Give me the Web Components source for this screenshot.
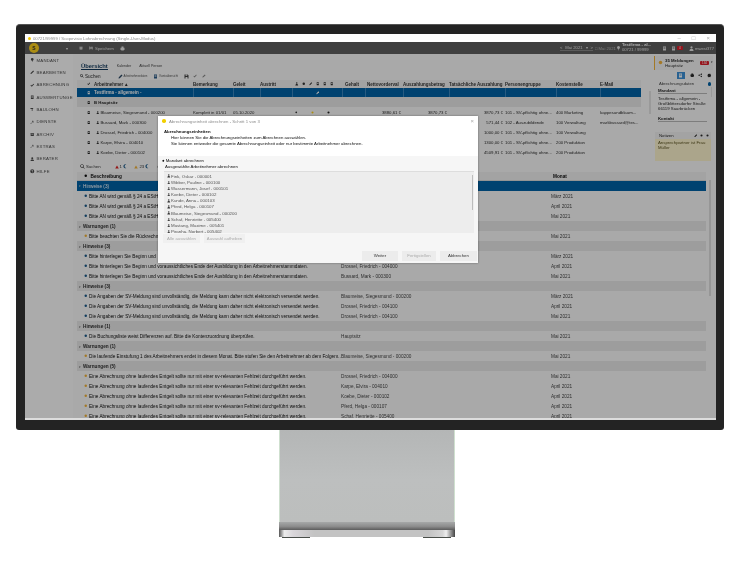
<!DOCTYPE html>
<html lang="de">
<head>
<meta charset="utf-8">
<title>Lohnabrechnung</title>
<style>
  html, body { margin: 0; background: #fff; height: 100%; overflow: hidden; }
  body { font-family: "Liberation Sans", Arial, sans-serif; }
  #page { display: flex; flex-direction: column; padding: 24px 0 0 16px; }
</style>
</head>
<body>
<div id="page">
  <device-monitor>
    <window-titlebar></window-titlebar>
    <app-shell>
      <app-toolbar slot="top"></app-toolbar>
      <side-nav slot="nav"></side-nav>
      <employee-table slot="table"></employee-table>
      <info-panel slot="panel"></info-panel>
      <message-list slot="messages"></message-list>
      <wizard-dialog slot="dialog"></wizard-dialog>
    </app-shell>
  </device-monitor>
  <device-stand></device-stand>
</div>

<script>
/**
 * Small inline icons, all on a 10x10 box.
 */
const ICONS = {
    person: '<circle cx="5" cy="2.8" r="2.2"/><path d="M1 10c0-3 1.6-4.4 4-4.4S9 7 9 10z"/>',
    pencil: '<path d="M1 9l.6-2.6L7 1l2 2-5.4 5.4z"/>',
    check: '<path d="M1 5.5l1.4-1.4L4 5.7 7.8 1.5 9.2 3 4 8.6z"/>',
    doc: '<path d="M2 1h6v8H2zM3 3v1h4V3zM3 5v1h4V5z" fill-rule="evenodd"/>',
    pin: '<path d="M5 0a3 3 0 013 3c0 1.6-1.4 2.5-2.4 3.4L5 10l-.6-3.6C3.400 5.500 2 4.600 2 3a3 3 0 013-3z"/>',
    box: '<path d="M1 2h8v2H1zM1.500 4.500h7V9h-7zM3 5.500v1h4v-1z" fill-rule="evenodd"/>',
    wrench: '<path d="M9 2.500A3 3 0 015 5L2 9 1 8l4-3.200A3 3 0 017.500 1L6 2.500 7.500 4z"/>',
    hammer: '<path d="M1 2h6v2.500H5.500V9H4V4.500H1z"/>',
    help: '<path d="M5 .5a4.500 4.500 0 100 9 4.500 4.500 0 000-9zM4.300 7h1.400v1.200H4.300zM3 3.800C3 2.600 4 2 5 2s2 .6 2 1.700c0 1.300-1.300 1.400-1.300 2.600H4.400c0-1.800 1.300-1.800 1.300-2.600 0-.4-.3-.6-.7-.6s-.7.3-.7.7z" fill-rule="evenodd"/>',
    search: '<path d="M4 .5a3.500 3.500 0 012.800 5.600L9.500 8.800 8.800 9.500 6.100 6.800A3.500 3.500 0 114 .5zm0 1.200a2.300 2.300 0 100 4.600 2.300 2.300 0 000-4.600z" fill-rule="evenodd"/>',
    save: '<path d="M1 1h6.500L9 2.500V9H1zM3 1.500v2h3.500v-2zM3 6v3h4V6z" fill-rule="evenodd"/>',
    printer: '<path d="M3 1h4v2.500h2V8H7.500v1h-5V8H1V3.500h2z"/>',
    share: '<path d="M7.500 1a1.500 1.500 0 11-1.200 2.400L3.900 4.600a1.500 1.500 0 010 .8l2.400 1.200a1.500 1.500 0 11-.4.8L3.400 6.200a1.500 1.500 0 110-2.400l2.500-1.200A1.500 1.500 0 017.500 1z"/>',
    gear: '<path d="M5 1l1 1 1.500-.3.400 1.400L9 4.500 8.500 6l.5 1.200-1.300.8L7 9.200 5 8.800l-2 .4-.7-1.200L1 7.200 1.500 6 1 4.500 2.100 3.100l.4-1.400L4 2z"/>',
    flag: '<path d="M5 1l4.500 8h-9z"/>',
    moon: '<path d="M7.500 1a4 4 0 000 8A4.500 4.500 0 117.500 1z"/>',
    dot: '<circle cx="5" cy="5" r="3.500"/>',
};

const icon = (name, size, color) =>
    `<svg viewBox="0 0 10 10" width="${size}" height="${size}" fill="${color || 'currentColor'}" style="flex:none;display:block">${ICONS[name]}</svg>`;

/** Bezel of the display; the screen content goes in the slot. */
class DeviceMonitor extends HTMLElement {
    constructor() {
        super();
        this.attachShadow({ mode: 'open' });
        this.shadowRoot.innerHTML = `
            <style>
                :host {
                    display: flex;
                    flex-direction: column;
                    width: 708px;
                    height: 406px;
                    box-sizing: border-box;
                    padding: 9px 8px 10px 9px;
                    background: #232323;
                    border-top: 1px solid #555;
                    border-radius: 4px 4px 3px 3px;
                }
                .screen {
                    display: flex;
                    flex-direction: column;
                    flex: 1;
                    min-height: 0;
                    overflow: hidden;
                    border-bottom: 2px solid #dcdcdc;
                    filter: blur(0.38px);
                }
            </style>
            <div class="screen"><slot></slot></div>
        `;
    }
}
customElements.define('device-monitor', DeviceMonitor);

/** Aluminium stand below the display. */
class DeviceStand extends HTMLElement {
    constructor() {
        super();
        this.attachShadow({ mode: 'open' });
        this.shadowRoot.innerHTML = `
            <style>
                :host {
                    display: flex;
                    flex-direction: column;
                    width: 176px;
                    margin-left: 263px;
                }
                .neck {
                    height: 92px;
                    background: linear-gradient(180deg, #b4b6b6 0%, #bdbfbf 55%, #bcbebd 100%);
                    border-left: 1px solid #cfe0cf;
                    border-right: 1px solid #cfe0cf;
                }
                .bend {
                    height: 8px;
                    background: linear-gradient(180deg, #a6a8a8 0%, #8d8d8d 55%, #5c5c5c 100%);
                }
                .base {
                    height: 7px;
                    background: linear-gradient(90deg, #555 0, #ececec 3%, #d9d6da 8%, #c3c3c3 20%, #c3c3c3 85%, #d6d6d6 93%, #eee 95%, #444 100%);
                }
                .feet {
                    display: flex;
                    justify-content: space-between;
                    padding: 0 4px 0 3px;
                }
                .feet i {
                    width: 28px;
                    height: 1px;
                    background: #4a4f4a;
                }
            </style>
            <div class="neck"></div>
            <div class="bend"></div>
            <div class="base"></div>
            <div class="feet"><i></i><i></i></div>
        `;
    }
}
customElements.define('device-stand', DeviceStand);

/** White OS window title bar. */
class WindowTitlebar extends HTMLElement {
    constructor() {
        super();
        this.attachShadow({ mode: 'open' });
        this.shadowRoot.innerHTML = `
            <style>
                :host {
                    display: flex;
                    align-items: center;
                    flex: none;
                    height: 8px;
                    padding: 0 6px 0 3px;
                    background: #fff;
                    color: #8a8a8a;
                    font: 4.25px "Liberation Sans", sans-serif;
                }
                .logo { width: 3px; height: 3px; border-radius: 50%; background: #f2c500; margin-right: 2px; }
                .title { flex: 1; white-space: nowrap; }
                .controls { display: flex; gap: 11px; color: #aaa; font-size: 6px; }
            </style>
            <span class="logo"></span>
            <span class="title">00721/99999 / Scopevisio Lohnabrechnung (Single-User-Modus)</span>
            <span class="controls"><span>–</span><span>□</span><span>×</span></span>
        `;
    }
}
customElements.define('window-titlebar', WindowTitlebar);

/** Frame of the application: bar, nav, table, panel, messages, and the modal over them. */
class AppShell extends HTMLElement {
    constructor() {
        super();
        this.attachShadow({ mode: 'open' });
        this.shadowRoot.innerHTML = `
            <style>
                :host {
                    display: flex;
                    flex-direction: column;
                    flex: 1;
                    min-height: 0;
                    position: relative;
                    background: #fff;
                    overflow: hidden;
                }
                .body { display: flex; flex: 1; min-height: 0; }
                .main { display: flex; flex-direction: column; flex: 1; min-width: 0; }
                .upper { display: flex; flex: none; height: 107px; }
                .backdrop { position: absolute; inset: 0; background: rgba(0, 0, 0, 0.33); }
                ::slotted([slot="dialog"]) { position: absolute; left: 133px; top: 74px; }
            </style>
            <slot name="top"></slot>
            <div class="body">
                <slot name="nav"></slot>
                <div class="main">
                    <div class="upper">
                        <slot name="table"></slot>
                        <slot name="panel"></slot>
                    </div>
                    <slot name="messages"></slot>
                </div>
            </div>
            <div class="backdrop"></div>
            <slot name="dialog"></slot>
        `;
    }
}
customElements.define('app-shell', AppShell);

/** Dark application bar. */
class AppToolbar extends HTMLElement {
    constructor() {
        super();
        this.attachShadow({ mode: 'open' });
        this.shadowRoot.innerHTML = `
            <style>
                :host {
                    display: flex;
                    align-items: center;
                    flex: none;
                    height: 12px;
                    padding: 0 2px 0 4px;
                    background: #606060;
                    color: #e6e6e6;
                    font: 4.2px "Liberation Sans", sans-serif;
                    white-space: nowrap;
                }
                .logo {
                    width: 10px; height: 10px; border-radius: 50%;
                    background: #ffd21e;
                    margin-right: 27px;
                    display: grid; place-items: center;
                    color: #333; font: bold 5px "Liberation Sans", sans-serif;
                }
                .left { display: flex; align-items: center; gap: 2px; flex: 1; }
                .chev { margin-right: 9px; font-size: 4px; }
                .right { display: flex; align-items: center; }
                .period { display: flex; gap: 3px; border-bottom: 1px solid #8a8a8a; margin-right: 2px; width: 33px; justify-content: space-between; }
                .to { width: 21px; color: #b8b8b8; }
                .firm { line-height: 4.800px; margin: 0 7px 0 1px; width: 33px; }
                .firm b { color: #fff; }
                .badge { background: #e0202c; color: #fff; font-size: 3px; width: 6px; height: 4px; border-radius: 1px; display: grid; place-items: center; margin: 0 4px 0 0; }
            </style>
            <span class="logo">S</span>
            <div class="left">
                <span class="chev">▾</span>
                ${icon('box', 4)}
                <span style="width:2px"></span>
                ${icon('save', 4)}
                <span>Speichern</span>
                <span style="width:2px"></span>
                ${icon('printer', 5)}
            </div>
            <div class="right">
                <div class="period"><span>&lt;</span><span>Mai 2021</span><span>▾</span><span>&gt;</span></div>
                <div class="to">□ Mai 2021</div>
                ${icon('pin', 5)}
                <div class="firm"><b>Testfirma - al...</b><br>00721 / 99999</div>
                ${icon('doc', 5)}
                <span style="width:4px"></span>
                ${icon('doc', 5)}
                <span style="width:1px"></span>
                <span class="badge">4</span>
                <span style="width:2px"></span>
                ${icon('person', 5)}
                <span style="margin-left:1px">mwest377</span>
            </div>
        `;
    }
}
customElements.define('app-toolbar', AppToolbar);

const NAV_ITEMS = [
    ['pin', 'Mandant'], ['pencil', 'Bearbeiten'], ['check', 'Abrechnung'], ['doc', 'Auswertungen'],
    ['hammer', 'Baulohn'], ['wrench', 'Dienste'], ['box', 'Archiv'], ['wrench', 'Extras'],
    ['person', 'Berater'], ['help', 'Hilfe'],
];

/** Left navigation. */
class SideNav extends HTMLElement {
    constructor() {
        super();
        this.attachShadow({ mode: 'open' });
        const items = NAV_ITEMS.map(([i, label]) =>
            `<div class="item">${icon(i, 4.5)}<span>${label}</span></div>`).join('');
        this.shadowRoot.innerHTML = `
            <style>
                :host {
                    display: flex;
                    flex-direction: column;
                    flex: none;
                    width: 48px;
                    box-sizing: border-box;
                    padding: 0 0 0 5px;
                    background: #fff;
                    color: #4c4c4c;
                    font: 4.3px "Liberation Sans", sans-serif;
                    text-transform: uppercase;
                    letter-spacing: 0.22px;
                }
                .item { display: flex; align-items: center; gap: 2px; height: 12.35px; white-space: nowrap; }
            </style>
            ${items}
        `;
    }
}
customElements.define('side-nav', SideNav);

const EMP_COLS = '17px 99px 40px 27px 32px 50px 23px 38px 46px 56px 51px 44px 41px';
const EMPLOYEES = [
    ['Blaumeise, Siegesmund - 000200', '3870,73 €', '101 - SV-pflichtig ohne...', '400 Marketing', 'kappesundblaum...'],
    ['Bussard, Mark - 000300', '571,44 €', '102 - Auszubildende', '100 Verwaltung', 'markbussard@tes...'],
    ['Drossel, Friedrich - 004000', '1000,00 €', '101 - SV-pflichtig ohne...', '100 Verwaltung', ''],
    ['Karpe, Elvira - 004010', '1300,00 €', '101 - SV-pflichtig ohne...', '200 Produktion', ''],
    ['Koebe, Dieter - 000102', '4509,91 €', '101 - SV-pflichtig ohne...', '200 Produktion', ''],
];

/** Employee grid with its tabs and toolbar. */
class EmployeeTable extends HTMLElement {
    constructor() {
        super();
        this.attachShadow({ mode: 'open' });
        const rows = EMPLOYEES.map((e, i) => `
            <div class="row">
                <span class="c">${icon('doc', 3.5)}</span>
                <span class="who">${icon('person', 3.5)}<span>${e[0]}</span></span>
                <span>${i === 0 ? 'Komplett in 01/01' : ''}</span><span>${i === 0 ? '05.10.2020' : ''}</span><span></span>
                <span class="icons">${i === 0 ? icon('dot', 2.5, '#333') + '<i></i>' + icon('dot', 3, '#ffd21e') + '<i></i>' + icon('dot', 3, '#222') : ''}</span>
                <span></span>
                <span class="n">${i === 0 ? '3880,61 €' : ''}</span><span class="n">${i === 0 ? '3870,73 €' : ''}</span><span class="n">${e[1]}</span>
                <span>${e[2]}</span><span>${e[3]}</span><span>${e[4]}</span>
            </div>`).join('');
        this.shadowRoot.innerHTML = `
            <style>
                :host {
                    display: flex;
                    flex-direction: column;
                    flex: none;
                    width: 568px;
                    box-sizing: border-box;
                    padding: 7px 0 0 4px;
                    background: #fdfdfd;
                    color: #2a2a2a;
                    font: 4.5px "Liberation Sans", sans-serif;
                    white-space: nowrap;
                }
                .tabs { display: flex; align-items: center; gap: 8px; height: 12px; padding-left: 4px; color: #444; font-size: 3.6px; }
                .tabs b { font-size: 5.800px; color: #123a5c; border-bottom: 1px solid #123a5c; padding-bottom: .5px; margin-right: 1px; }
                .tools { display: flex; align-items: center; height: 9px; padding-left: 3px; font-size: 4.6px; }
                .tools .btn { display: flex; align-items: center; gap: 1px; font-size: 2.800px; color: #555; }
                .row, .head { display: grid; grid-template-columns: ${EMP_COLS}; align-items: center; width: 564px; }
                .row > span, .head > span { overflow: hidden; }
                .head { height: 9px; font-weight: bold; color: #333; background: #f4f4f4; }
                .row { height: 10px; }
                .list .row { font-size: 4.3px; }
                .c { display: flex; justify-content: flex-end; padding-right: 4px; color: #222; }
                .n { text-align: right; padding-right: 2px; }
                .who { display: flex; align-items: center; gap: 1px; padding-left: 2px; }
                .icons { display: flex; gap: 3.5px; padding-left: 3px; align-items: center; }
                .icons i { width: 6px; }
                .firm { background: #0063a8; color: #fff; font-weight: bold; }
                .firm .c { color: #fff; }
                .firm > span:nth-child(n+3) { border-left: .5px solid #3d88c0; height: 100%; }
                .group { background: #ebebeb; font-weight: bold; }
                .list { overflow: hidden; height: 70px; }
            </style>
            <div class="tabs"><b>Übersicht</b><span>Kalender</span><span>Aktuell Person</span></div>
            <div class="tools">
                ${icon('search', 4)}<span style="margin:0 17px 0 1px">Suchen</span>
                <span class="btn">${icon('pencil', 5, '#2c4a66')}Arbeitnehmerdaten</span>
                <span style="width:6px"></span>
                <span class="btn">${icon('doc', 5, '#2c5c88')}Kontoübersicht</span>
                <span style="width:6px"></span>
                ${icon('save', 5, '#444')}<span style="width:4px"></span>${icon('check', 4, '#888')}<span style="width:5px"></span>${icon('pencil', 4, '#888')}
            </div>
            <div class="head">
                <span class="c">${icon('check', 3.5)}</span>
                <span>Arbeitnehmer ▴</span><span>Bemerkung</span><span>Geleit</span><span>Austritt</span>
                <span class="icons">${icon('person', 3.5)}${icon('dot', 3.5)}${icon('pencil', 3.5)}${icon('doc', 3.5)}${icon('doc', 3.5)}${icon('doc', 3.5)}</span>
                <span style="padding-left:3px">Gehalt</span><span style="padding-left:2px">Nettovorderval</span><span>Auszahlungsbetrag</span>
                <span>Tatsächliche Auszahlung</span><span>Personengruppe</span><span>Kostenstelle</span><span>E-Mail</span>
            </div>
            <div class="row firm">
                <span class="c">${icon('doc', 3.5)}</span><span>Testfirma - allgemein -</span>
                <span></span><span></span><span></span>
                <span style="display:flex;justify-content:center;align-items:center">${icon('pencil', 3.5)}</span>
                <span></span><span></span><span></span><span></span><span></span><span></span><span></span>
            </div>
            <div class="list">
                <div class="row group">
                    <span class="c">${icon('doc', 3.5)}</span><span>B Hauptsitz</span>
                </div>
                ${rows}
            </div>
        `;
    }
}
customElements.define('employee-table', EmployeeTable);

/** Right column: message card, master data, notes. */
class InfoPanel extends HTMLElement {
    constructor() {
        super();
        this.attachShadow({ mode: 'open' });
        this.shadowRoot.innerHTML = `
            <style>
                :host {
                    display: flex;
                    flex-direction: column;
                    flex: 1;
                    min-width: 0;
                    position: relative;
                    background: #fdfdfd;
                    color: #2a2a2a;
                    font: 4.300px/5px "Liberation Sans", sans-serif;
                    padding: 2px 3px 0 13px;
                    white-space: nowrap;
                }
                .track { position: absolute; left: 8px; top: 37px; width: 1.500px; height: 23px; background: #e4e4e4; }
                .msg { display: flex; align-items: center; height: 15px; border-left: 1px solid #f4b43a; padding-left: 3px; gap: 2px; background: #f6f6f6; }
                .msg .txt { flex: 1; line-height: 5.200px; }
                .badge { background: #e0202c; color: #fff; font-size: 3px; line-height: 4px; padding: 0 1.500px; width: 6px; text-align: center; border-radius: 1px; }
                .icons { display: flex; justify-content: flex-end; align-items: center; gap: 4px; height: 11px; margin-top: 1px; padding-right: 2px; }
                .blue { width: 8px; height: 7px; background: #3f93d8; display: grid; place-items: center; color: #fff; margin-right: 1px; }
                .title { display: flex; justify-content: space-between; align-items: center; height: 7px; padding: 0 2px 0 5px; color: #444; font-size: 4.200px; }
                .title i { width: 3.500px; height: 3.500px; border-radius: 50%; background: #0063a8; }
                .data { position: relative; padding: 1px 6px 0 4px; box-sizing: border-box; }
                .data b { display: block; border-bottom: .5px solid #bbb; margin-bottom: 1.500px; }
                .data .gap { height: 5px; }
                .sb { position: absolute; right: 1px; top: 0; width: 1.500px; height: 10px; background: #e4e4e4; }
                .notes { margin: 9px 2px 0 1px; }
                .notes .bar { display: flex; align-items: center; height: 7px; padding: 0 2px 0 4px; gap: 3px; background: #f4f4f4; }
                .notes .bar span { flex: 1; }
                .notes .text { background: #fff6d0; height: 20px; padding: 1px 3px; color: #5c5420; white-space: normal; }
            </style>
            <div class="track"></div>
            <div class="msg">
                <span style="display:flex">${icon('dot', 5, '#f4b43a')}</span>
                <span class="txt"><b>35 Meldungen</b><br>Hauptsitz</span>
                <span class="badge">134</span><span style="font-size:3px">▾</span>
            </div>
            <div class="icons"><span class="blue">${icon('doc', 5)}</span>${icon('printer', 4.500)}${icon('share', 4.500)}${icon('gear', 4.500)}</div>
            <div class="title"><span>Abrechnungsdaten</span><i></i></div>
            <div class="data">
                <b>Mandant</b>
                Testfirma - allgemein -<br>Großblittersdorfer Straße<br>66119 Saarbrücken
                <div class="gap"></div>
                <b>Kontakt</b>
                <div class="sb"></div>
            </div>
            <div class="notes">
                <div class="bar"><span>Notizen</span>${icon('pencil', 3.500)}${icon('dot', 3)}${icon('dot', 3)}</div>
                <div class="text">Ansprechpartner ist Frau Müller</div>
            </div>
        `;
    }
}
customElements.define('info-panel', InfoPanel);

const H = 'h', W = 'w';
// Rows that sit behind the dialog only keep what is visible left of it, and their month.
const AN = 'Bitte AN wird gemäß § 24 a EStH';
const AUSB = 'Bitte hinterlegen Sie Beginn und voraussichtliches Ende der Ausbildung in den Arbeitnehmerstammdaten.';
const SV = 'Die Angaben der SV-Meldung sind unvollständig, die Meldung kann daher nicht elektronisch versendet werden.';
const ENTG = 'Eine Abrechnung ohne laufendes Entgelt sollte nur mit einer sv-relevanten Fehlzeit durchgeführt werden.';
const MESSAGES = [
    [H, AN, '', 'März 2021'],
    [H, AN, '', 'April 2021'],
    [H, AN, '', 'Mai 2021'],
    ['Warnungen (1)'],
    [W, 'Bitte beachten Sie die Rückrechn', '', 'Mai 2021'],
    ['Hinweise (3)'],
    [H, 'Bitte hinterlegen Sie Beginn und', '', 'März 2021'],
    [H, AUSB, 'Drossel, Friedrich - 004000', 'April 2021'],
    [H, AUSB, 'Bussard, Mark - 000300', 'Mai 2021'],
    ['Hinweise (3)'],
    [H, SV, 'Blaumeise, Siegesmund - 000200', 'März 2021'],
    [H, SV, 'Drossel, Friedrich - 004100', 'April 2021'],
    [H, SV, 'Drossel, Friedrich - 004100', 'Mai 2021'],
    ['Hinweise (1)'],
    [H, 'Die Buchungsliste weist Differenzen auf. Bitte die Kontenzuordnung überprüfen.', 'Hauptsitz', 'Mai 2021'],
    ['Warnungen (1)'],
    [W, 'Die laufende Einstufung 1 des Arbeitnehmers endet in diesem Monat. Bitte stufen Sie den Arbeitnehmer ab dem Folgem...', 'Blaumeise, Siegesmund - 000200', 'Mai 2021'],
    ['Warnungen (5)'],
    [W, ENTG, 'Drossel, Friedrich - 004000', 'Mai 2021'],
    [W, ENTG, 'Karpe, Elvira - 004010', 'April 2021'],
    [W, ENTG, 'Koebe, Dieter - 000102', 'April 2021'],
    [W, ENTG, 'Pferd, Helga - 000107', 'April 2021'],
    [W, ENTG, 'Schaf, Henriette - 005400', 'April 2021'],
];

/** Lower grid with the grouped messages. */
class MessageList extends HTMLElement {
    constructor() {
        super();
        this.attachShadow({ mode: 'open' });
        const rows = MESSAGES.map((m) => {
            if (m.length === 1) return `<div class="group"><span class="tw">▾</span>${m[0]}</div>`;
            const color = m[0] === W ? '#f4b43a' : '#1c5c8c';
            return `<div class="row"><span class="ic">${icon('dot', 3.5, color)}</span><span class="d">${m[1]}</span><span class="w">${m[2]}</span><span class="m">${m[3]}</span></div>`;
        }).join('');
        this.shadowRoot.innerHTML = `
            <style>
                :host {
                    display: flex;
                    flex-direction: column;
                    flex: 1;
                    min-height: 0;
                    position: relative;
                    box-sizing: border-box;
                    padding: 0 0 0 4px;
                    background: #fdfdfd;
                    color: #0c0c0c;
                    font: 4.700px "Liberation Sans", sans-serif;
                    white-space: nowrap;
                    overflow: hidden;
                }
                .search { display: flex; align-items: center; height: 11px; padding-left: 3px; flex: none; color: #333; font-size: 5px; }
                .search b { font-weight: normal; margin: 0 0 0 1px; font-size: 4.300px; }
                .head { display: flex; align-items: center; height: 8px; flex: none; font-weight: bold; padding-left: 7px; gap: 3px; background: #f4f4f4; width: 629px; box-sizing: border-box; position: relative; }
                .head .mo { position: absolute; left: 476px; }
                .blue { height: 11px; flex: none; width: 629px; box-sizing: border-box; display: flex; align-items: center; background: #0063a8; color: #fff; padding-left: 2px; border-top: .5px solid #ddd; }
                .tw { display: inline-block; width: 4px; font-size: 3px; color: #666; }
                .blue .tw { color: #ccc; }
                .rows { width: 629px; }
                .row { display: flex; align-items: center; height: 10px; }
                .ic { width: 12px; flex: none; display: flex; justify-content: flex-end; padding-right: 2px; box-sizing: border-box; }
                .d { width: 252px; flex: none; overflow: hidden; }
                .w { width: 210px; flex: none; color: #444; }
                .m { color: #444; }
                .group { height: 10px; display: flex; align-items: center; padding: 1px 0 0 2px; box-sizing: border-box; background: #ebebeb; font-weight: bold; color: #333; }
                .track { position: absolute; right: 5px; top: 19px; width: 2px; height: 116px; background: #e0e0e0; }
            </style>
            <div class="search">
                ${icon('search', 5)}<b style="margin-right:14px">Suchen</b>
                ${icon('flag', 4, '#d22')}<b style="margin-right:1px">1</b>${icon('moon', 4.500, '#1c5c8c')}
                <span style="width:7px"></span>
                ${icon('flag', 4, '#f4b43a')}<b style="margin-right:1px">23</b>${icon('moon', 4.500, '#1c5c8c')}
                <span style="width:7px"></span>${icon('dot', 4, '#222')}
            </div>
            <div class="head"><span style="display:flex">${icon('dot', 3.500)}</span><span>Beschreibung</span><span class="mo">Monat</span></div>
            <div class="blue"><span class="tw">▾</span>Hinweise (3)</div>
            <div class="rows">${rows}</div>
            <div class="track"></div>
        `;
    }
}
customElements.define('message-list', MessageList);

const PEOPLE = [
    'Fink, Oskar - 000001', 'Wibber, Pauline - 000100', 'Wassermann, Josef - 000101', 'Koebe, Dieter - 000102',
    'Kunde, Anna - 000103', 'Pferd, Helga - 000107', 'Blaumeise, Siegesmund - 000200', 'Schaf, Henriette - 005400',
    'Mustang, Maxime - 005401', 'Piranha, Norbert - 005402',
];

/** Modal wizard over the dimmed application. */
class WizardDialog extends HTMLElement {
    constructor() {
        super();
        this.attachShadow({ mode: 'open' });
        const people = PEOPLE.map((p) => `<div class="p">${icon('person', 3.500, '#333')}<span>${p}</span></div>`).join('');
        this.shadowRoot.innerHTML = `
            <style>
                :host {
                    display: flex;
                    flex-direction: column;
                    width: 320px;
                    height: 147px;
                    background: #fff;
                    color: #0e0e0e;
                    font: 4.300px "Liberation Sans", sans-serif;
                    box-shadow: 0 0 2px rgba(0, 0, 0, .4);
                    white-space: nowrap;
                }
                .title { display: flex; align-items: center; height: 10px; flex: none; padding: 0 4px; color: #8d8d8d; gap: 3px; }
                .title span { flex: 1; }
                .title i { width: 3.500px; height: 3.500px; border-radius: 50%; background: #f2d000; margin-right: .5px; }
                .title em { font-style: normal; color: #aaa; font-size: 6px; }
                .intro { height: 30px; flex: none; box-sizing: border-box; padding: 3px 6px 0; line-height: 6px; }
                .intro b { display: block; }
                .intro div { padding-left: 7px; }
                .body { flex: 1; display: flex; flex-direction: column; background: #f6f6f6; min-height: 0; }
                .opt { padding: 2px 0 0 4px; line-height: 6.400px; flex: none; height: 15px; box-sizing: border-box; }
                .opt div { padding-left: 3px; }
                .list { position: relative; flex: none; height: 62px; margin: 0 4px 0 6px; padding: 1px 0 0 3px; background: #ededed; box-sizing: border-box; overflow: hidden; color: #555; border-top: .5px solid #ddd; }
                .p { display: flex; align-items: center; gap: .5px; height: 6.180px; font-size: 4.400px; }
                .sb { position: absolute; right: 1px; top: 3px; width: 1.500px; height: 35px; background: #bcbcbc; }
                .sel { display: flex; gap: 4px; padding: 1px 0 0 5px; flex: none; height: 10px; box-sizing: border-box; }
                .sel span { height: 9px; display: grid; place-items: center; background: #f0f0f0; color: #aaa; }
                .foot { display: flex; justify-content: flex-end; align-items: flex-start; gap: 4px; flex: 1; padding: 8px 1px 0 0; color: #333; }
                .foot span { height: 9.500px; display: grid; place-items: center; background: #ececec; width: 36px; }
                .foot .off { color: #aaa; }
            </style>
            <div class="title"><i></i><span>Abrechnungseinheit abrechnen - Schritt 1 von 3</span><em>×</em></div>
            <div class="intro">
                <b>Abrechnungseinheiten</b>
                <div>Hier können Sie die Abrechnungseinheiten zum Abrechnen auswählen.</div>
                <div>Sie können entweder die gesamte Abrechnungseinheit oder nur bestimmte Arbeitnehmer abrechnen.</div>
            </div>
            <div class="body">
                <div class="opt">● Mandant abrechnen<div>Ausgewählte Arbeitnehmer abrechnen</div></div>
                <div class="list">${people}<div class="sb"></div></div>
                <div class="sel"><span style="width:37px">Alle auswählen</span><span style="width:41px">Auswahl aufheben</span></div>
                <div class="foot"><span>Weiter</span><span class="off" style="width:34px">Fertigstellen</span><span style="width:37px">Abbrechen</span></div>
            </div>
        `;
    }
}
customElements.define('wizard-dialog', WizardDialog);
</script>
</body>
</html>
